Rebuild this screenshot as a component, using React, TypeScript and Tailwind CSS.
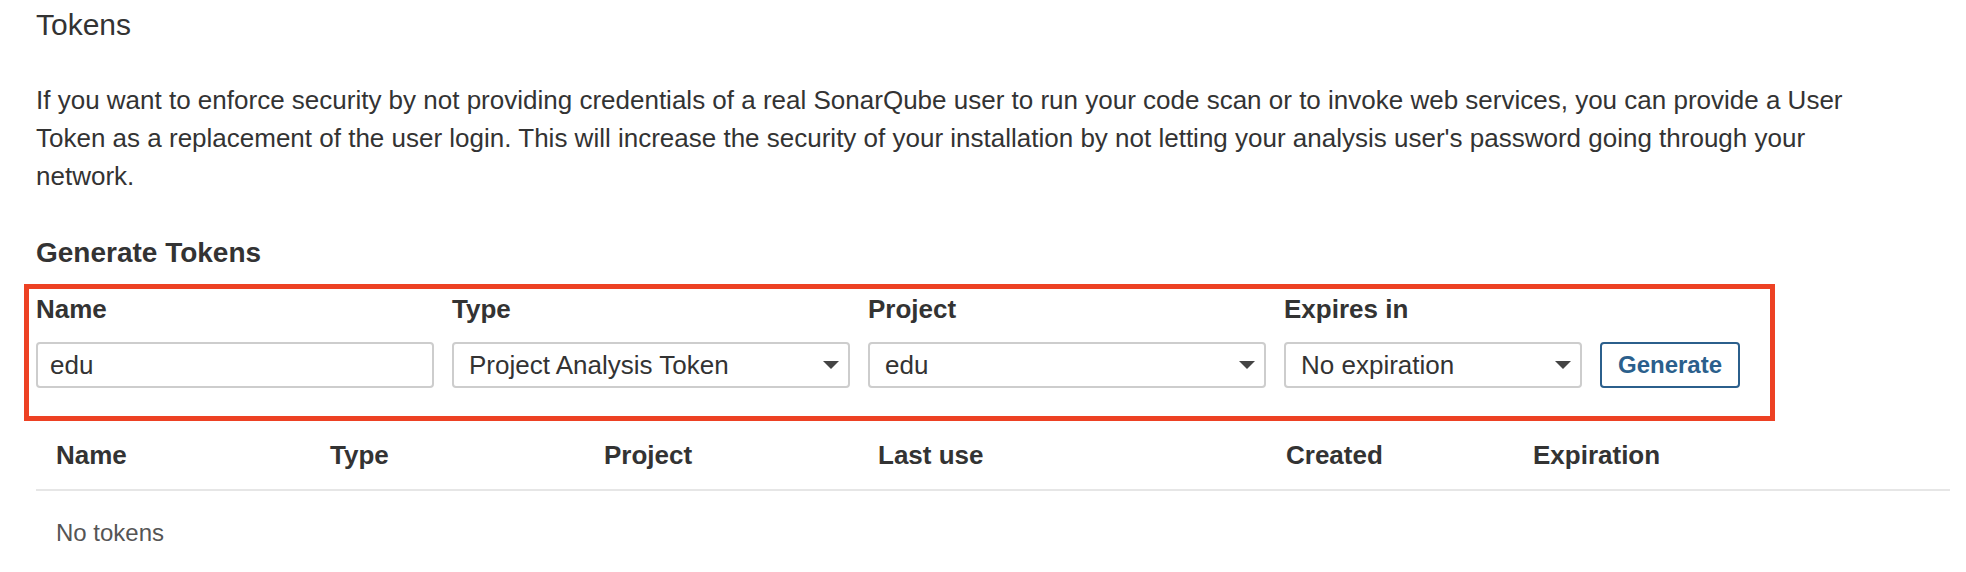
const fields = [
  { label: "Name", value: "edu", width: "w-[398px]", kind: "input" },
  { label: "Type", value: "Project Analysis Token", width: "w-[398px]", kind: "select" },
  { label: "Project", value: "edu", width: "w-[398px]", kind: "select" },
  { label: "Expires in", value: "No expiration", width: "w-[298px]", kind: "select" },
];

const columns = ["Name", "Type", "Project", "Last use", "Created", "Expiration"];

function Caret() {
  return (
    <svg width="16" height="8" viewBox="0 0 16 8" className="shrink-0">
      <path d="M0 0 L16 0 L8 8 Z" fill="#444444" />
    </svg>
  );
}

export default function App() {
  return (
    <div className="min-h-screen bg-white text-[#333333] font-['Liberation_Sans',Arial,sans-serif] pl-[36px] pr-[16px] pt-[9px]">
      <h2 className="text-[30px] leading-[32px] font-normal">Tokens</h2>

      <p className="mt-[40px] text-[26px] leading-[38px] whitespace-nowrap">
        If you want to enforce security by not providing credentials of a real SonarQube user to run your code scan or to invoke web services, you can provide a User
        <br />
        Token as a replacement of the user login. This will increase the security of your installation by not letting your analysis user's password going through your
        <br />
        network.
      </p>

      <h3 className="mt-[42px] text-[28px] leading-[32px] font-bold">Generate Tokens</h3>

      {/* red annotation frame around the form */}
      <div className="mt-[15px] -ml-[12px] w-[1751px] border-[5px] border-[#ed4123] pl-[7px] pt-[6px] pb-[28px]">
        <div className="flex items-end gap-[18px]">
          {fields.map((f) => (
            <div key={f.label} className={`flex flex-col ${f.width}`}>
              <label className="text-[26px] leading-[28px] font-bold mb-[19px]">{f.label}</label>
              {f.kind === "input" ? (
                <input
                  defaultValue={f.value}
                  className="h-[46px] w-full rounded-[4px] border-2 border-[#cdcdcd] px-[12px] text-[26px] text-[#333333] outline-none"
                />
              ) : (
                <div className="flex h-[46px] w-full items-center justify-between rounded-[4px] border-2 border-[#cdcdcd] pl-[15px] pr-[9px] text-[26px]">
                  <span>{f.value}</span>
                  <Caret />
                </div>
              )}
            </div>
          ))}
          <button className="h-[46px] w-[140px] rounded-[4px] border-2 border-[#2b5f8c] text-[24px] font-bold text-[#2b5f8c]">
            Generate
          </button>
        </div>
      </div>

      <div className="grid grid-cols-[274px_274px_274px_408px_247px_1fr] border-b-2 border-[#e6e6e6] pt-[20px] pb-[20px]">
        {columns.map((c) => (
          <div key={c} className="pl-[20px] text-[26px] leading-[28px] font-bold">
            {c}
          </div>
        ))}
      </div>

      <div className="pl-[20px] pt-[28px] text-[24px] leading-[28px] text-[#555555]">No tokens</div>
    </div>
  );
}
